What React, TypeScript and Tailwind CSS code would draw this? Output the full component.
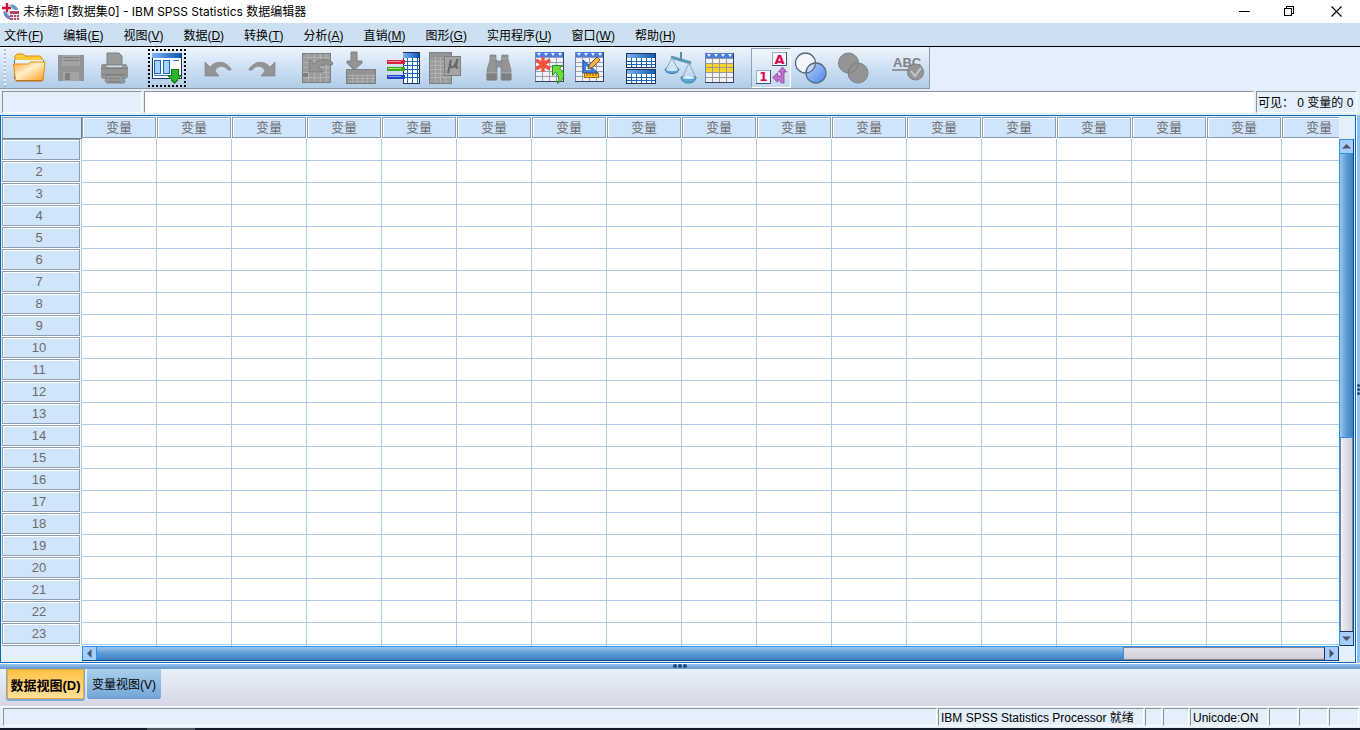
import type { ReactNode } from "react";
import clsx from "clsx";

const MENUS = [
  ["文件", "F"], ["编辑", "E"], ["视图", "V"], ["数据", "D"], ["转换", "T"], ["分析", "A"],
  ["直销", "M"], ["图形", "G"], ["实用程序", "U"], ["窗口", "W"], ["帮助", "H"],
];

const COLUMNS = Array.from({ length: 17 }, (_, i) => i);
const ROWS = Array.from({ length: 23 }, (_, i) => i + 1);

const GREY = "#939495";
const GREY_DARK = "#7e7f80";

function AppIcon() {
  return (
    <svg width="18" height="18" viewBox="0 0 18 18" aria-hidden="true">
      <circle cx="9" cy="9" r="7.5" fill="#8db9d6" />
      <path d="M9 1.500a7.500 7.500 0 0 1 7.500 7.500H11z" fill="#5c9cc6" />
      <path d="M1.500 9A7.500 7.500 0 0 0 9 16.500V9z" fill="#6c86b8" />
      <circle cx="9" cy="9" r="4" fill="#cfe2ee" />
      <path d="M0 5h9M5 1v8" stroke="#fff" strokeWidth="4" />
      <path d="M0 5h9M5 0v9" stroke="#d50f3c" strokeWidth="2.4" />
      <rect x="8" y="7" width="10" height="10" fill="#fff" />
      <rect x="8" y="8" width="9" height="9" fill="#b04a6a" />
      <path d="M8 11.500h9M8 14.500h9M11.500 11v6M14.500 11v6" stroke="#f6e6ec" />
    </svg>
  );
}

/* spreadsheet page with a coloured header strip */
function Sheet({ band }: { band?: boolean }) {
  return (
    <g>
      <rect x="5" y="4" width="29" height="30" fill="#eef1f8" />
      <rect x="5" y="4" width="29" height="5" fill="#4a7be0" />
      {band && <rect x="5" y="14" width="29" height="9" fill="#f6d32d" />}
      <path d="M5 9.500h29M5 14.500h29M5 18.500h29M5 23.500h29M5 28.500h29M12.500 9v25M19.500 9v25M26.500 9v25" stroke={band ? "#9a9a8e" : "#9aa0b0"} />
      <path d="M7 5h4l-2 3zM14 5h4l-2 3zM21 5h4l-2 3zM28 5h4l-2 3z" fill="#e9f2ff" />
      <path d="M5.500 4v30" stroke="#6f86b8" />
      <path d="M5 33.500h29M33.500 4v30" stroke="#33406a" />
    </g>
  );
}

const ICONS: Record<string, ReactNode> = {
  open: (
    <g>
      <path d="M6 12V8l2-2h6l2 2h15l2 2v5H6z" fill="#ffc93c" stroke="#e68a00" />
      <path d="M5 12h30v19H5z" fill="#2f7cc8" />
      <path d="M6 12h28v4H6z" fill="#e8f4ff" />
      <path d="M4.500 16h15l2-2h14.500l-2 18.500H6.500z" fill="url(#folder)" stroke="#f08a10" />
      <path d="M7 33h26" stroke="#9b6a20" />
    </g>
  ),
  save: (
    <g fill={GREY} shapeRendering="crispEdges">
      <rect x="7" y="7" width="26" height="26" />
      <rect x="11" y="7" width="18" height="11" fill="#a3a4a5" />
      <path d="M12 9.500h16M12 12.500h16" stroke={GREY_DARK} />
      <rect x="12" y="24" width="16" height="9" fill="#a3a4a5" />
      <rect x="14" y="25" width="5" height="7" fill={GREY_DARK} />
    </g>
  ),
  print: (
    <g fill={GREY}>
      <path d="M14 5h12l3 3v9H14z" fill="#999a9b" stroke={GREY_DARK} />
      <path d="M9 16h5v3h15v-3h4l2 3v10l-2 2H10l-2-2V18z" />
      <path d="M8 20.500h27M9 26.500h25" stroke={GREY_DARK} />
      <path d="M14 27h15l3 7-2 1H14l-2-2z" fill="#999a9b" stroke={GREY_DARK} />
      <path d="M15 30.500h12M15 33.500h12" stroke={GREY_DARK} />
    </g>
  ),
  recall: (
    <g shapeRendering="crispEdges">
      <rect x="5" y="5" width="29" height="25" fill="#fff" stroke="#20345e" />
      <rect x="5" y="5" width="29" height="5" fill="url(#blueBar)" />
      <rect x="7.500" y="12.500" width="6" height="13" fill="#a7d3ff" stroke="#1767bd" />
      <rect x="16.500" y="12.500" width="6" height="13" fill="#a7d3ff" stroke="#1767bd" />
      <path d="M26 12.500h6M7 27.500h17" stroke="#2c7fd6" />
      <path d="M24 21h7v6h4l-7.500 8L20 27h4z" fill="#2fb52a" stroke="#12781a" />
    </g>
  ),
  undo: <path d="M7 14l5 5c5-6 15-7 21 2v1h-3c-4-5-10-5-13 1l4 5H7z" fill={GREY} stroke={GREY_DARK} strokeWidth=".6" />,
  redo: <path d="M35 14l-5 5c-5-6-15-7-21 2v1h3c4-5 10-5 13 1l-4 5h14z" fill={GREY} stroke={GREY_DARK} strokeWidth=".6" />,
  gotoCase: (
    <g>
      <rect x="5" y="5" width="29" height="30" fill="#9b9c9d" />
      <path d="M5 9.500h29M5 14.500h29M5 19.500h29M5 24.500h29M5 29.500h29M11.500 5v30M17.500 5v30M23.500 5v30M29.500 5v30" stroke="#b2b3b4" />
      <rect x="5" y="25" width="6" height="4" fill={GREY_DARK} />
      <rect x="5.500" y="5.500" width="28" height="29" fill="none" stroke={GREY_DARK} />
      <path d="M12 11l5 5c5-5 13-6 19-1l-1 2c-6-2-10-1-13 2l4 5H12z" fill={GREY} stroke={GREY_DARK} />
    </g>
  ),
  gotoVar: (
    <g>
      <rect x="7.500" y="21.500" width="29" height="14" fill={GREY} stroke={GREY_DARK} />
      <path d="M9 27.500h27M9 30.500h27M9 33.500h27M13.500 27v8M18.500 27v8M23.500 27v8M28.500 27v8M33.500 27v8" stroke="#b0b1b2" />
      <path d="M12 4h6v9h5v2l-8 7-7-7v-2h4z" fill={GREY} stroke={GREY_DARK} />
    </g>
  ),
  variables: (
    <g shapeRendering="crispEdges">
      <rect x="22" y="4" width="16" height="31" fill="#fff" stroke="#20345e" />
      <rect x="22" y="5" width="16" height="5" fill="url(#blueBar)" />
      <path d="M22 13.500h16M22 17.500h16M22 21.500h16M22 25.500h16M22 29.500h16M26.500 10v25M31.500 10v25M36.500 10v25" stroke="#1767bd" />
      <rect x="6" y="12" width="18" height="4" fill="#d8203f" />
      <path d="M7 13.500h13" stroke="#f78a98" />
      <rect x="6" y="19" width="18" height="4" fill="#3aa61e" />
      <path d="M7 20.500h13" stroke="#9be86e" />
      <rect x="6" y="27" width="18" height="4" fill="#2342c4" />
      <path d="M7 28.500h13" stroke="#79a4f4" />
    </g>
  ),
  descriptives: (
    <g>
      <rect x="6.500" y="4.500" width="22" height="31" fill="#9b9c9d" stroke={GREY_DARK} />
      <rect x="7" y="5" width="21" height="4" fill={GREY} />
      <path d="M7 13.500h21M7 17.500h21M7 21.500h21M7 25.500h21M7 29.500h21M12.500 9v26M17.500 9v26M22.500 9v26" stroke="#b2b3b4" />
      <rect x="21.500" y="8.500" width="16" height="19" fill="#a3a4a5" stroke={GREY_DARK} />
      <path d="M28 12l-3 13M27.500 16c-1 4 3 5 5 0l2-5-1.500 7c0 2 1 2 2 1" fill="none" stroke="#636465" strokeWidth="2" />
    </g>
  ),
  find: (
    <g fill={GREY} stroke={GREY_DARK} strokeWidth=".7">
      <path d="M10 7h6v4l1 3v18H7V22l3-10z" />
      <path d="M22 7h6v4l3 11v10H21V14z" />
      <rect x="16" y="13" width="6" height="6" />
      <path d="M7 24.500h10M21 24.500h10M10 10.500h6M22 10.500h6" stroke="#abacad" />
      <path d="M7 26h9v6H7zM22 26h9v6h-9z" fill={GREY_DARK} />
    </g>
  ),
  insertCase: (
    <g>
      <Sheet />
      <path d="M13 9v15M6 12l14 9M20 12L6 21" stroke="#f0503c" strokeWidth="3.4" />
      <path d="M22.500 17.500h10l-3 3c6 4 6 10-2 15 2-6 1-9-2-11l-3 3z" fill="#6cdc3e" stroke="#248a1a" />
    </g>
  ),
  insertVariable: (
    <g>
      <Sheet />
      <path d="M13 12v13h15z" fill="#3f7fe0" stroke="#1f4fae" />
      <path d="M16 18v4h5z" fill="#e8f1ff" />
      <path d="M18 21l2-5 7-7 3 3-7 7z" fill="#f6b451" stroke="#7d4a18" />
      <rect x="14.500" y="25.500" width="14" height="4" fill="#ffc62c" stroke="#b46a00" />
      <path d="M17 26v2M20 26v2M23 26v2M26 26v2" stroke="#7d4a18" />
    </g>
  ),
  split: (
    <g shapeRendering="crispEdges">
      {[5, 21].map((y) => (
        <g key={y} transform={`translate(0 ${y})`}>
          <rect x="5" width="30" height="15" fill="#fff" />
          <rect x="5" width="30" height="5" fill="url(#blueBar)" />
          <path d="M6 8.500h29M6 11.500h29M10.500 5v9M15.500 5v9M20.500 5v9M25.500 5v9M30.500 5v9" stroke="#1767bd" />
          <rect x="5.500" y=".5" width="29" height="14" fill="none" stroke="#20345e" />
        </g>
      ))}
    </g>
  ),
  weight: (
    <g fill="none" stroke="#5b9bb8">
      <path d="M10 9l20 6" stroke="#5f97b4" strokeWidth="3" />
      <path d="M20 4v8" stroke="#508fae" strokeWidth="2" />
      <path d="M11 10L5 21M11 10l6 11M28 15l-7 15M28 15l7 15" stroke="#83a9ba" />
      <path d="M4 21h14c0 6-14 6-14 0z" fill="#5ea7dd" stroke="#3679a2" />
      <path d="M20 29h15c0 8-15 8-15 0z" fill="#5ea7dd" stroke="#3679a2" />
      <ellipse cx="11" cy="21.500" rx="6" ry="1.500" fill="#dff3fc" stroke="none" />
      <ellipse cx="27.500" cy="29.500" rx="6" ry="1.500" fill="#dff3fc" stroke="none" />
    </g>
  ),
  select: (
    <g transform="translate(-1 1)">
      <Sheet band />
    </g>
  ),
  valueLabels: (
    <g transform="translate(-1 -1)">
      <rect x="21" y="4" width="15" height="14" fill="#f4f8fd" />
      <path d="M21.500 18V4.500H36" fill="none" stroke="#93adcd" />
      <path d="M21 17.500h14.500V4" fill="none" stroke="#34527c" />
      <text x="28.500" y="16" textAnchor="middle" fontSize="13" fontWeight="bold" fontFamily="DejaVu Sans, sans-serif" fill="#e3004d">A</text>
      <rect x="5" y="22" width="15" height="14" fill="#f4f8fd" />
      <path d="M5.500 35V22.500H20" fill="none" stroke="#93adcd" />
      <path d="M5 35.500h14.500V22" fill="none" stroke="#34527c" />
      <text x="12.500" y="33" textAnchor="middle" fontSize="12" fontWeight="bold" fontFamily="DejaVu Sans, sans-serif" fill="#e3004d">1</text>
      <path d="M31.500 19l4 5H33v11h-2.500l-4-4v3l-5-4.500 5-4.500v3h3.500v-4h-2.500z" fill="#c074cc" stroke="#8a3f9c" strokeWidth=".8" />
    </g>
  ),
  useSets: (
    <g strokeWidth="1.3" stroke="#5c6880">
      <circle cx="14.500" cy="15" r="10" fill="#f2f5fc" />
      <circle cx="25" cy="25" r="10" fill="url(#ball)" />
      <path d="M24.500 15a10 10 0 0 1-9.500 10A10 10 0 0 1 24.500 15z" fill="#c5d8f8" />
    </g>
  ),
  showAll: (
    <g fill={GREY} stroke={GREY_DARK}>
      <circle cx="17.500" cy="15" r="10" />
      <circle cx="27" cy="25" r="10" />
      <path d="M27.500 15a10 10 0 0 1-10 10A10 10 0 0 1 27.500 15z" />
    </g>
  ),
  spelling: (
    <g>
      <text x="5" y="19" fontSize="13" fontWeight="bold" fontFamily="Liberation Sans, sans-serif" fill={GREY_DARK}>ABC</text>
      <path d="M4 22h18" stroke={GREY_DARK} strokeWidth="1.5" />
      <circle cx="27.500" cy="24" r="8" fill={GREY} stroke={GREY_DARK} />
      <path d="M23 23l4 5 6-8" fill="none" stroke="#c6c7c8" strokeWidth="2" />
    </g>
  ),
};

function ToolButton({ icon, label, className }: { icon: string; label: string; className?: string }) {
  return (
    <button type="button" aria-label={label} title={label} className={clsx("block size-10 shrink-0", className)}>
      <svg width="40" height="40" viewBox="0 0 40 40" className="block max-w-none" aria-hidden="true">
        {ICONS[icon]}
      </svg>
    </button>
  );
}

function Gradients() {
  return (
    <svg width="0" height="0" className="absolute" aria-hidden="true">
      <defs>
        <linearGradient id="folder" x1="0" y1="0" x2="1" y2="1">
          <stop offset="0" stopColor="#ffa53a" />
          <stop offset=".45" stopColor="#fff0c8" />
          <stop offset="1" stopColor="#ff9a1e" />
        </linearGradient>
        <linearGradient id="blueBar" x1="0" y1="0" x2="1" y2="0">
          <stop offset="0" stopColor="#7fb6f2" />
          <stop offset="1" stopColor="#0b56b4" />
        </linearGradient>
        <linearGradient id="ball" x1="0" y1="0" x2="1" y2="1">
          <stop offset="0" stopColor="#b8d2fa" />
          <stop offset="1" stopColor="#4a86ea" />
        </linearGradient>
      </defs>
    </svg>
  );
}

function TitleBar() {
  return (
    <header className="flex h-[23px] shrink-0 items-center bg-white pl-[2px]">
      <AppIcon />
      <h1 className="ml-[3px] flex-1 font-[Inter,'Noto_Sans_CJK_SC',sans-serif] text-[12px] leading-4">
        未标题1 [数据集0] - IBM SPSS Statistics 数据编辑器
      </h1>
      <div className="flex">
        <button type="button" aria-label="最小化" className="flex h-5 w-[46px] items-center justify-center">
          <svg width="11" height="11" viewBox="0 0 11 11" shapeRendering="crispEdges">
            <path d="M0 5.500h11" stroke="#000" />
          </svg>
        </button>
        <button type="button" aria-label="还原" className="flex h-5 w-[45px] items-center justify-center">
          <svg width="11" height="11" viewBox="0 0 11 11" fill="none" stroke="#000" shapeRendering="crispEdges">
            <path d="M.5 2.500h7v7h-7zM2.500 2V.5h7v7H8" />
          </svg>
        </button>
        <button type="button" aria-label="关闭" className="flex h-5 w-12 items-center justify-center">
          <svg width="11" height="11" viewBox="0 0 11 11">
            <path d="M.5.5l10 10M10.500.5l-10 10" stroke="#000" strokeWidth="1.2" />
          </svg>
        </button>
      </div>
    </header>
  );
}

function MenuBar() {
  return (
    <nav className="flex h-6 shrink-0 items-center gap-5 border-b border-black bg-[#cde0f1] pt-[2px] pl-1">
      {MENUS.map(([name, key]) => (
        <button key={key} type="button" className="whitespace-nowrap text-[12px] leading-4">
          {name}(<u className="underline-offset-1">{key}</u>)
        </button>
      ))}
    </nav>
  );
}

function ToolBar() {
  return (
    <div className="flex h-[42px] shrink-0 bg-[#e3effb]">
      <div role="toolbar" className="flex border-r border-b border-[#8f98a3] bg-gradient-to-b from-[#edf5fd] to-[#b0cce8] pt-px pr-px">
        <div className="my-px ml-1 w-[2px] bg-[repeating-linear-gradient(to_bottom,#a9bdd2_0_2px,#f2f8ff_2px_4px)]" />
        <div className="ml-[3px] flex gap-0.5">
          <ToolButton icon="open" label="打开" />
          <ToolButton icon="save" label="保存" />
          <ToolButton icon="print" label="打印" />
        </div>
        <ToolButton icon="recall" label="重新调用对话框" className="ml-[14px] outline-2 -outline-offset-3 outline-dotted outline-black" />
        <div className="ml-[11px] flex gap-0.5">
          <ToolButton icon="undo" label="撤消" />
          <ToolButton icon="redo" label="重做" />
        </div>
        <div className="ml-[17px] flex gap-0.5">
          <ToolButton icon="gotoCase" label="转到个案" />
          <ToolButton icon="gotoVar" label="转到变量" />
          <ToolButton icon="variables" label="变量" />
          <ToolButton icon="descriptives" label="描述统计" />
        </div>
        <ToolButton icon="find" label="查找" className="ml-[17px]" />
        <div className="ml-[10px] flex">
          <ToolButton icon="insertCase" label="插入个案" />
          <ToolButton icon="insertVariable" label="插入变量" />
        </div>
        <div className="ml-[11px] flex">
          <ToolButton icon="split" label="拆分文件" />
          <ToolButton icon="weight" label="加权个案" />
          <ToolButton icon="select" label="选择个案" />
        </div>
        <div className="ml-[10px] flex">
          <ToolButton icon="valueLabels" label="值标签" className="border border-[#8fa3b8] border-r-white border-b-white bg-white/25" />
          <ToolButton icon="useSets" label="使用变量集" />
          <ToolButton icon="showAll" label="显示所有变量" />
        </div>
        <ToolButton icon="spelling" label="拼写检查" className="ml-[17px]" />
      </div>
    </div>
  );
}

function CellEditor() {
  const sunken = "h-[22px] border border-[#8f9296] border-r-white border-b-white";
  return (
    <div className="flex h-[26px] shrink-0 gap-[2px] bg-[#e3effb] pt-[2px] pr-[3px] pl-[2px]">
      <input aria-label="当前单元格" readOnly className={clsx(sunken, "w-[140px] bg-[#e3effb]")} />
      <input aria-label="单元格编辑器" className={clsx(sunken, "min-w-0 flex-1 bg-white")} />
      <div className={clsx(sunken, "w-[101px] pl-px text-[12px] leading-[22px] whitespace-nowrap")}>可见： 0 变量的 0</div>
    </div>
  );
}

function Arrow({ d }: { d: string }) {
  return (
    <svg width="9" height="9" viewBox="0 0 9 9" className="block">
      <path d={d} fill="#4d5560" />
    </svg>
  );
}

function VerticalScrollbar({ extent }: { extent: number }) {
  return (
    <div className="flex w-[15px] flex-1 flex-col border-r border-l border-r-[#12457c] border-l-[#2a90f4] bg-[#d9d8e2]">
      <button type="button" aria-label="向上滚动" className="flex h-[15px] shrink-0 items-center justify-center border-y border-[#2a90f4] bg-[#a6cdfb]">
        <Arrow d="M0 6.500L4.500 2 9 6.500z" />
      </button>
      <div className="min-h-0 flex-1 border-x border-[#85868c] bg-gradient-to-r from-[#f0f0f5] to-[#cfcdd8]">
        <div className="-mx-px border-b border-[#2a90f4] bg-gradient-to-r from-[#9cc8ec] via-[#5b9bd4] to-[#3b80c4]" style={{ height: `${extent * 100}%` }} />
      </div>
      <button type="button" aria-label="向下滚动" className="flex h-[15px] shrink-0 items-center justify-center border-y border-[#16365e] bg-[#a6cdfb]">
        <Arrow d="M0 2.500L4.500 7 9 2.500z" />
      </button>
    </div>
  );
}

function HorizontalScrollbar({ extent }: { extent: number }) {
  return (
    <div className="flex h-[15px] flex-1 border-y border-t-[#2a90f4] border-b-[#12457c] bg-[#d9d8e2]">
      <button type="button" aria-label="向左滚动" className="flex w-[15px] items-center justify-center border-x border-[#2a90f4] bg-[#a6cdfb]">
        <Arrow d="M6.500 0L2 4.500 6.500 9z" />
      </button>
      <div className="min-w-0 flex-1 border-y border-[#85868c] bg-gradient-to-b from-[#e4e3ec] to-[#cfcdd8]">
        <div className="-my-px h-[13px] border-r border-[#2a90f4] bg-gradient-to-b from-[#9cc8ec] via-[#5b9bd4] to-[#3b80c4]" style={{ width: `${extent * 100}%` }} />
      </div>
      <button type="button" aria-label="向右滚动" className="flex w-[15px] items-center justify-center border-x border-[#16365e] bg-[#a6cdfb]">
        <Arrow d="M2.500 0L7 4.500 2.500 9z" />
      </button>
    </div>
  );
}

function HeaderBox({ children, className }: { children?: ReactNode; className?: string }) {
  return (
    <div className={clsx("mr-px mb-px h-[21px] border border-[#8e9db5] bg-[#d0e4fc] text-center text-[13px] text-[#6b6b6b] shadow-[inset_1px_1px_0_#fff]", className)}>
      {children}
    </div>
  );
}

function DataGrid() {
  return (
    <div className="flex min-h-0 flex-1 bg-[#e3effb]">
      <main className="flex min-w-0 flex-1 flex-col border border-[#0a68bc] p-px">
        <div className="flex min-h-0 flex-1">
          <div className="min-w-0 flex-1 overflow-hidden bg-white">
            <table className="w-max table-fixed border-separate border-spacing-0">
              <colgroup>
                <col className="w-20" />
                {COLUMNS.map((c) => <col key={c} className="w-[75px]" />)}
              </colgroup>
              <thead>
                <tr>
                  <td className="h-[22px] border border-t-[#8e9db5] border-r-[#6c7b94] border-b-[#6c7b94] border-l-[#8e9db5] bg-[#d0e4fc] p-0" />
                  {COLUMNS.map((c) => (
                    <th key={c} scope="col" className="h-[22px] bg-white p-0 font-normal">
                      <HeaderBox className="leading-5">变量</HeaderBox>
                    </th>
                  ))}
                </tr>
              </thead>
              <tbody>
                {ROWS.map((r) => (
                  <tr key={r}>
                    <th scope="row" className="h-[22px] border-r border-[#abcbe8] bg-white p-0 font-normal">
                      <HeaderBox className="pr-1 leading-[19px]">{r}</HeaderBox>
                    </th>
                    {COLUMNS.map((c) => <td key={c} className="border-r border-b border-[#abcbe8] p-0" />)}
                  </tr>
                ))}
                {/* next row, scrolled out of view */}
                <tr>
                  <td className="h-[22px] border-r border-[#abcbe8] bg-white p-0">
                    <HeaderBox />
                  </td>
                  {COLUMNS.map((c) => <td key={c} className="border-r border-b border-[#abcbe8] p-0" />)}
                </tr>
              </tbody>
            </table>
          </div>
          <div className="flex flex-col pt-[22px]">
            <VerticalScrollbar extent={0.595} />
          </div>
        </div>
        <div className="flex shrink-0 pr-[15px] pl-20">
          <HorizontalScrollbar extent={0.837} />
        </div>
      </main>
      <div className="flex w-1 shrink-0 flex-col items-center justify-center gap-px border-l border-white bg-[#8fc1f3]">
        <i className="size-[3px] rounded-full bg-[#1f4a86]" />
        <i className="size-[3px] rounded-full bg-[#1f4a86]" />
        <i className="size-[3px] rounded-full bg-[#1f4a86]" />
      </div>
    </div>
  );
}

function StatusCell({ children, className }: { children?: ReactNode; className?: string }) {
  return (
    <div className={clsx("h-[18px] border border-[#8f9296] border-r-white border-b-white pl-[2px] text-[12px] leading-[18px] whitespace-nowrap", className)}>
      {children}
    </div>
  );
}

export default function App() {
  return (
    <div className="flex h-screen flex-col overflow-hidden bg-[#e3effb] font-['Liberation_Sans','Noto_Sans_CJK_SC',sans-serif] text-black">
      <Gradients />
      <TitleBar />
      <MenuBar />
      <ToolBar />
      <CellEditor />
      <DataGrid />
      <div className="flex h-[6px] shrink-0 items-center justify-center gap-px border-t border-b border-t-white border-b-[#6e9cce] bg-gradient-to-b from-[#93c5f5] to-[#6e9cce]">
        <i className="size-1 rounded-full bg-[#1f4a86]" />
        <i className="size-1 rounded-full bg-[#1f4a86]" />
        <i className="size-1 rounded-full bg-[#1f4a86]" />
      </div>
      <div role="tablist" className="flex h-[37px] shrink-0 items-start gap-[2px] bg-gradient-to-b from-[#e6f1fc] to-[#d8d6e5] pl-[6px]">
        <button role="tab" aria-selected="true" type="button" className="h-8 w-[79px] rounded-b-[3px] border-x border-b-2 border-[#7aa9d8] bg-gradient-to-b from-[#ffc13c] to-[#ffe09c] pt-1 text-[13px] leading-4 font-bold whitespace-nowrap shadow-[inset_0_0_0_1px_#e8ac3c]">
          数据视图(D)
        </button>
        <button role="tab" aria-selected="false" type="button" className="h-[30px] w-[74px] rounded-b-[3px] border-b-2 border-[#6d9fd0] bg-gradient-to-b from-[#a9cfeb] to-[#76a8d8] pt-1 text-[12px] leading-4 whitespace-nowrap">
          变量视图(V)
        </button>
      </div>
      <footer className="shrink-0 border-t border-white">
        <div className="flex h-[21px] gap-px pt-px pr-px pl-[3px]">
          <StatusCell className="flex-1" />
          <StatusCell className="w-[206px]">IBM SPSS Statistics Processor 就绪</StatusCell>
          <StatusCell className="w-[17px]" />
          <StatusCell className="w-[26px]" />
          <StatusCell className="w-[78px]">Unicode:ON</StatusCell>
          <StatusCell className="w-[29px]" />
          <StatusCell className="w-[29px]" />
          <StatusCell className="w-[30px]" />
        </div>
        <div className="h-[2px] bg-[#101d28] pl-[147px]">
          <div className="h-full w-12 bg-[#4a555f]" />
        </div>
      </footer>
    </div>
  );
}
